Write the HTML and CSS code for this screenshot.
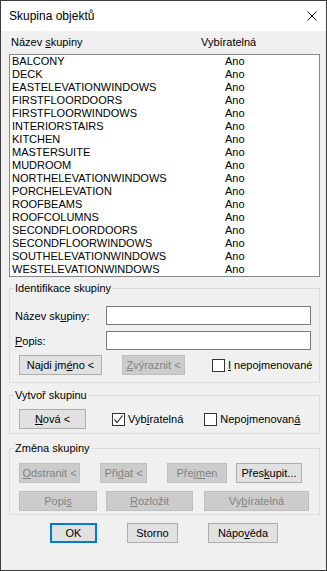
FILE: index.html
```html
<!DOCTYPE html>
<html>

<head>
    <meta charset="UTF-8">
    <meta name="viewport" content="width=device-width, initial-scale=1.0">
    <title>Skupina objektů</title>
    <link rel="stylesheet" href="styles.css">
</head>

<body>
    <div class="window">
        <div class="titlebar">
            <span class="title">Skupina objektů</span>
            <svg class="close" width="10" height="10" viewBox="0 0 10 10">
                <path d="M0.5 0.5 L9.5 9.5 M9.5 0.5 L0.5 9.5" stroke="#000" stroke-width="1" fill="none" />
            </svg>
        </div>

        <div class="client">
            <div class="list_head">
                <span class="col_name">Název <u>s</u>kupiny</span>
                <span>Vybíratelná</span>
            </div>

            <div class="listbox" id="group_list"></div>

            <fieldset class="group group_ident">
                <legend>Identifikace skupiny</legend>
                <div class="field first">
                    <label>Název sk<u>u</u>piny:</label>
                    <input type="text">
                </div>
                <div class="field">
                    <label><u>P</u>opis:</label>
                    <input type="text">
                </div>
                <div class="btn_row ident_btns">
                    <button class="btn btn_find">Najdi jm<u>é</u>no &lt;</button>
                    <button class="btn btn_hilite" disabled><u>Z</u>výraznit &lt;</button>
                    <span class="check"></span>
                    <span class="check_label"><u>I</u> nepojmenované</span>
                </div>
            </fieldset>

            <fieldset class="group group_new">
                <legend>Vytvoř skupinu</legend>
                <div class="btn_row new_btns">
                    <button class="btn btn_new"><u>N</u>ová &lt;</button>
                    <span class="check checked">
                        <svg width="11" height="11" viewBox="0 0 11 11">
                            <path d="M1.5 5.5 L4 8.5 L9.5 1.5" stroke="#333" stroke-width="1.2" fill="none" />
                        </svg>
                    </span>
                    <span class="check_label">Vyb<u>í</u>ratelná</span>
                    <span class="check check_unnamed"></span>
                    <span class="check_label">Nepojmenovan<u>á</u></span>
                </div>
            </fieldset>

            <fieldset class="group group_edit">
                <legend>Změna skupiny</legend>
                <div class="btn_row edit_row1">
                    <button class="btn w_remove" disabled><u>O</u>dstranit &lt;</button>
                    <button class="btn w_add" disabled>Při<u>d</u>at &lt;</button>
                    <button class="btn w_rename" disabled>Přej<u>m</u>en</button>
                    <button class="btn w_reorder">Přes<u>k</u>upit...</button>
                </div>
                <div class="btn_row edit_row2">
                    <button class="btn w_desc" disabled>Popi<u>s</u></button>
                    <button class="btn w_explode" disabled><u>R</u>ozložit</button>
                    <button class="btn w_select" disabled>Vy<u>b</u>íratelná</button>
                </div>
            </fieldset>

            <div class="dialog_btns">
                <button class="btn btn_ok">OK</button>
                <button class="btn btn_cancel">Storno</button>
                <button class="btn btn_help">Nápo<u>v</u>ěda</button>
            </div>
        </div>
    </div>

    <script>
        var groups = [
            "BALCONY",
            "DECK",
            "EASTELEVATIONWINDOWS",
            "FIRSTFLOORDOORS",
            "FIRSTFLOORWINDOWS",
            "INTERIORSTAIRS",
            "KITCHEN",
            "MASTERSUITE",
            "MUDROOM",
            "NORTHELEVATIONWINDOWS",
            "PORCHELEVATION",
            "ROOFBEAMS",
            "ROOFCOLUMNS",
            "SECONDFLOORDOORS",
            "SECONDFLOORWINDOWS",
            "SOUTHELEVATIONWINDOWS",
            "WESTELEVATIONWINDOWS"
        ];

        for (let i = 0; i < groups.length; i++) {
            var row = document.createElement('div');
            row.className = 'row';
            row.innerHTML = '<span>' + groups[i] + '</span><span>Ano</span>';
            document.getElementById('group_list').appendChild(row);
        }
    </script>
</body>

</html>
```

FILE: styles.css
```css
body {
    margin: 0;
    padding: 0;
    font-family: "Liberation Sans", Arial, sans-serif;
    font-size: 11px;
    color: #000;
}

.window {
    width: 327px;
    height: 571px;
    box-sizing: border-box;
    border: 1px solid #3a3a3a;
    display: flex;
    flex-direction: column;
    background-color: #f0f0f0;
}

.titlebar {
    height: 30px;
    background-color: #fff;
    display: flex;
    align-items: center;
    justify-content: space-between;
    padding: 0 9px 0 8px;
}

.title {
    font-size: 12px;
}

.close {
    display: block;
}

.client {
    flex: 1;
    padding: 0 6px 0 8px;
}

.list_head {
    display: flex;
    padding-top: 4px;
    padding-left: 2px;
    line-height: 14px;
    margin-bottom: 5px;
}

.list_head .col_name {
    width: 190px;
}

.listbox {
    background-color: #fff;
    border: 1px solid #828790;
}

.listbox .row {
    display: grid;
    grid-template-columns: 213px auto;
    height: 13px;
    line-height: 13px;
    padding-left: 2px;
}

/* group boxes */
.group {
    margin: 0;
    padding: 0 8px 0 0;
    border: 1px solid #dcdcdc;
    min-width: 0;
}

.group legend {
    margin-left: 4px;
    padding: 0 1px;
    line-height: 13px;
}

.group_ident {
    margin-top: 5px;
    padding-bottom: 7px;
}

.group_new {
    margin-top: 6px;
    padding-bottom: 4px;
}

.group_edit {
    margin-top: 8px;
    padding-bottom: 3px;
}

.field {
    display: flex;
    align-items: center;
    margin-top: 6px;
    padding-left: 5px;
}

.field.first {
    margin-top: 11px;
}

.field label {
    width: 91px;
    flex-shrink: 0;
}

.field input {
    flex: 1;
    min-width: 0;
    height: 19px;
    box-sizing: border-box;
    margin: 0;
    border: 1px solid #7a7a7a;
    background-color: #fff;
}

.btn_row {
    display: flex;
    align-items: center;
    padding-left: 9px;
    white-space: nowrap;
}

.btn_row > * {
    flex-shrink: 0;
}

.btn {
    height: 20px;
    box-sizing: border-box;
    margin: 0;
    padding: 0;
    font-family: inherit;
    font-size: 11px;
    color: #000;
    background-color: #e1e1e1;
    border: 1px solid #adadad;
    text-align: center;
}

.btn:disabled {
    color: #838383;
    background-color: #cccccc;
    border-color: #bfbfbf;
}

.check {
    width: 13px;
    height: 13px;
    box-sizing: border-box;
    border: 1px solid #333;
    background-color: #fff;
    display: flex;
    align-items: center;
    justify-content: center;
}

.check_label {
    margin-left: 4px;
}

.ident_btns {
    margin-top: 5px;
}

.btn_find {
    width: 83px;
}

.btn_hilite {
    width: 63px;
    margin-left: 20px;
}

.ident_btns .check {
    margin-left: 27px;
}

.ident_btns .check_label {
    margin-left: 3px;
}

.new_btns {
    margin-top: 7px;
}

.btn_new {
    width: 67px;
}

.new_btns .checked {
    margin-left: 26px;
}

.new_btns .check_unnamed {
    margin-left: 21px;
}

.new_btns .check_label {
    margin-left: 3px;
}

.edit_row1 {
    margin-top: 8px;
}

.edit_row2 {
    margin-top: 8px;
}

.w_remove {
    width: 61px;
}

.w_add {
    width: 47px;
    margin-left: 20px;
}

.w_rename {
    width: 60px;
    margin-left: 20px;
}

.w_reorder {
    width: 66px;
    margin-left: 9px;
}

.w_desc {
    width: 78px;
}

.w_explode {
    width: 87px;
    margin-left: 9px;
}

.w_select {
    width: 105px;
    margin-left: 11px;
}

.dialog_btns {
    display: flex;
    margin-top: 8px;
    padding-left: 41px;
}

.btn_ok {
    width: 47px;
    border: 2px solid #0078d7;
}

.btn_cancel {
    width: 51px;
    margin-left: 30px;
}

.btn_help {
    width: 70px;
    margin-left: 30px;
}
```
